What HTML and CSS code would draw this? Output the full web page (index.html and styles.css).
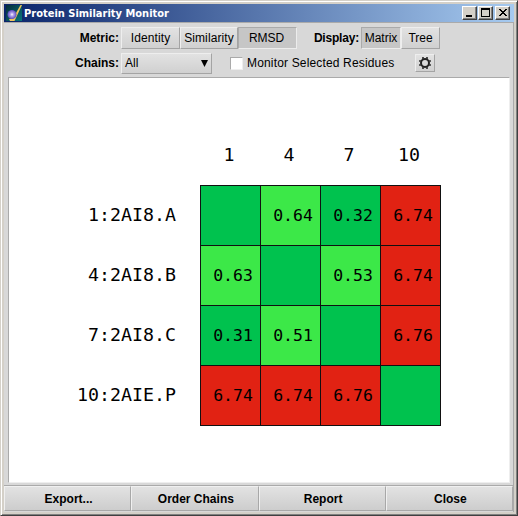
FILE: index.html
```html
<!DOCTYPE html>
<html lang="en"><head><meta charset="utf-8"><title>Protein Similarity Monitor</title>
<link rel="stylesheet" href="styles.css"></head>
<body>
<div class="window">
  <header class="titlebar">
    <svg class="logo" width="16" height="16" viewBox="0 0 16 16">
      <defs><radialGradient id="orb"><stop offset="0" stop-color="#fff"/><stop offset=".35" stop-color="#b4a4ec"/><stop offset="1" stop-color="#5a4ac0"/></radialGradient>
      <linearGradient id="sea" x1="0" y1="0" x2="1" y2="1"><stop offset="0" stop-color="#062b38"/><stop offset="1" stop-color="#08767c"/></linearGradient></defs>
      <rect width="16" height="16" fill="url(#sea)"/>
      <path d="M16 0L8.5 16H4L3 14L8 13L10 8L14.5 0Z" fill="#eec45c"/>
      <circle cx="6" cy="9.5" r="4.5" fill="url(#orb)"/>
    </svg>
    <h1 class="title">Protein Similarity Monitor</h1>
    <div class="controls">
      <span class="winbtn"><svg width="14" height="12"><path d="M3 8h6v2H3z"/></svg></span>
      <span class="winbtn"><svg width="14" height="12"><path fill-rule="evenodd" d="M2 1h9v9H2zM3 3v6h7V3z"/></svg></span>
      <span class="winbtn last"><svg width="14" height="12" shape-rendering="crispEdges"><path d="M3 2h2v1h1v1h2V3h1V2h2v1h-1v1H9v1H8v1h1v1h1v1h1v1H9V8H8V7H6v1H5v1H3V8h1V7h1V6h1V5H5V4H4V3H3z"/></svg></span>
    </div>
  </header>
  <main class="content">
    <div class="row first">
      <span class="label">Metric:</span>
      <span class="btn identity">Identity</span><span class="btn similarity">Similarity</span><span class="btn rmsd on">RMSD</span>
      <span class="label display">Display:</span>
      <span class="btn mat on">Matrix</span><span class="btn tree">Tree</span>
    </div>
    <div class="row second">
      <span class="label">Chains:</span>
      <span class="btn select">All<svg width="7" height="7"><path d="M0 0h7L3.5 7z"/></svg></span>
      <span class="check"></span><span class="checklabel">Monitor Selected Residues</span>
      <span class="btn gear"><svg width="14" height="14" viewBox="-7 -7 14 14"><circle r="4" fill="none" stroke="#222" stroke-width="2"/><path d="M-2-6V-4M2-6V-4M-2 4V6M2 4V6M-6-2H-4M-6 2H-4M4-2H6M4 2H6" stroke="#333" stroke-width="1.7"/></svg></span>
    </div>
    <section class="panel">
      <div class="matrix">
        <span></span><b>1</b><b>4</b><b>7</b><b>10</b>
        <span class="name">1:2AI8.A</span><i class="g"></i><i class="l">0.64</i><i class="g">0.32</i><i class="r">6.74</i>
        <span class="name">4:2AI8.B</span><i class="l">0.63</i><i class="g"></i><i class="l">0.53</i><i class="r">6.74</i>
        <span class="name">7:2AI8.C</span><i class="g">0.31</i><i class="l">0.51</i><i class="g"></i><i class="r">6.76</i>
        <span class="name">10:2AIE.P</span><i class="r">6.74</i><i class="r">6.74</i><i class="r">6.76</i><i class="g"></i>
      </div>
    </section>
    <footer class="actions"><span class="action">Export...</span><span class="action">Order Chains</span><span class="action">Report</span><span class="action">Close</span></footer>
  </main>
</div>
</body></html>
```
FILE: styles.css
```css
* { box-sizing: border-box; }
body { margin: 0; font: 12px "Liberation Sans", Arial, sans-serif; color: #000; }
.window { width: 518px; height: 516px; background: #d4d0c8; padding: 3px; border: 1px solid; border-color: #d4d0c8 #404040 #404040 #d4d0c8; box-shadow: inset 1px 1px #fff, inset -1px -1px #808080; }
.titlebar { display: flex; align-items: center; height: 18px; padding: 0 4px 0 2px; background: linear-gradient(90deg, #0a246a, #a6caf0); }
.logo { flex: none; }
.title { margin: 0 0 0 2px; flex: 1; white-space: nowrap; font: bold 11px "DejaVu Sans Condensed", "DejaVu Sans", sans-serif; color: #fff; }
.controls { display: flex; gap: 1px; }
.winbtn { width: 15px; height: 14px; background: #d4d0c8; border: 1px solid; border-color: #fff #404040 #404040 #fff; box-shadow: inset -1px -1px #808080; }
.winbtn.last { margin-left: 1px; }
.winbtn svg { display: block; }
.content { display: flex; flex-direction: column; height: 490px; background: #d8d8d8; border: 1px solid #aaa; border-width: 1px 1px 0 0; }
.row { display: flex; align-items: center; white-space: nowrap; }
.first { height: 22px; margin-top: 4px; }
.second { height: 22px; margin-top: 3px; }
.label { width: 115px; margin-right: 2px; text-align: right; font-weight: bold; }
.label.display { width: 62px; letter-spacing: -.2px; }
.btn { display: flex; align-items: center; justify-content: center; height: 22px; background: linear-gradient(#e2e2e2, #d0d0d0); border: 1px solid; border-color: #eee #a4a4a4 #a4a4a4 #eee; }
.btn.on { background: #c6c6c6; border-color: #aaa #ececec #ececec #aaa; }
.identity { width: 59px; letter-spacing: .1px; }
.similarity, .rmsd { width: 58px; letter-spacing: .1px; }
.rmsd { width: 59px; padding-right: 2px; letter-spacing: -.1px; }
.mat { width: 40px; }
.tree { width: 39px; }
.select { width: 91px; height: 21px; justify-content: space-between; padding: 0 3px; }
.check { width: 13px; height: 13px; margin: 0 4px 0 18px; background: #fff; border: 1px solid; border-color: #aaa #eee #eee #aaa; }
.checklabel { width: 168px; letter-spacing: .16px; }
.gear { width: 20px; height: 18px; }
.panel { width: 502px; height: 406px; margin: 3px 0 0 4px; background: #fff; border: 1px solid; border-color: #aaa #eee #eee #aaa; }
.matrix { display: grid; grid-template-columns: 171px repeat(4, 60px); grid-template-rows: 60px repeat(4, 60px); width: 411px; margin: 47px 0 0 20px; font: 18.27px "DejaVu Sans Mono", monospace; }
.matrix b { align-self: center; padding: 0 2px 2px 0; text-align: center; font-weight: normal; }
.name { align-self: center; padding: 0 24px 2px 0; text-align: right; }
.matrix i { display: flex; align-items: center; justify-content: center; padding-left: 5px; width: 61px; height: 61px; border: 1px solid #111; font: 16.45px "DejaVu Sans Mono", monospace; }
.g { background: #00c24e; }
.l { background: #3ce848; }
.r { background: #e12213; }
.actions { display: flex; width: 509px; height: 26px; margin-top: auto; margin-bottom: 1px; border-top: 1px solid #aaa; }
.action { flex: 1; display: flex; align-items: center; justify-content: center; padding: 1px 0 0 2px; background: linear-gradient(#e2e2e2, #cdcdcd); border: 1px solid; border-color: #f0f0f0 #a8a8a8 #a8a8a8 #f0f0f0; font-weight: bold; }
```
